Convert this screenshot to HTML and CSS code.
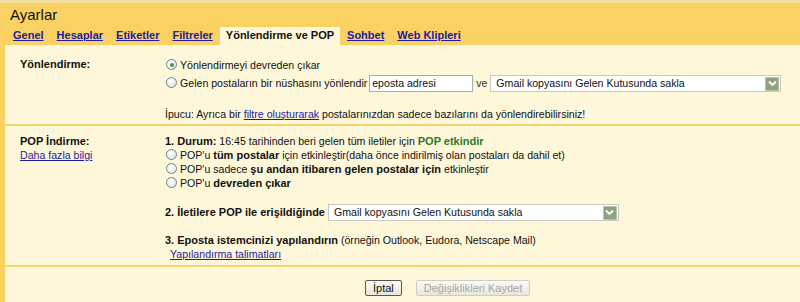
FILE: index.html
```html
<!DOCTYPE html>
<html lang="tr">
<head>
    <meta charset="UTF-8">
    <title>Ayarlar</title>
    <link rel="stylesheet" href="styles.css">
</head>
<body>
    <div class="settings">
        <div class="header">
            <h1>Ayarlar</h1>
            <div class="tabs">
                <a href="#" class="tab">Genel</a>
                <a href="#" class="tab">Hesaplar</a>
                <a href="#" class="tab">Etiketler</a>
                <a href="#" class="tab">Filtreler</a>
                <span class="tab active">Yönlendirme ve POP</span>
                <a href="#" class="tab">Sohbet</a>
                <a href="#" class="tab">Web Klipleri</a>
            </div>
        </div>

        <div class="content">
            <div class="section forward">
                <div class="label"><b>Yönlendirme:</b></div>
                <div class="options">
                    <div class="row"><span class="radio checked"></span>Yönlendirmeyi devreden çıkar</div>
                    <div class="row tall">
                        <span class="radio"></span>Gelen postaların bir nüshasını yönlendir
                        <span class="textbox">eposta adresi</span>
                        <span class="ve">ve</span>
                        <span class="select wide">Gmail kopyasını Gelen Kutusunda sakla<span class="arrow"><svg width="9" height="7" viewBox="0 0 9 7"><path d="M1 1.5 L4.5 5 L8 1.5" fill="none" stroke="#fff" stroke-width="1.8"/></svg></span></span>
                    </div>
                    <div class="row hint">İpucu: Ayrıca bir <a href="#">filtre oluşturarak</a> postalarınızdan sadece bazılarını da yönlendirebilirsiniz!</div>
                </div>
            </div>

            <div class="section pop">
                <div class="label">
                    <div class="row"><b>POP İndirme:</b></div>
                    <div class="row"><a href="#">Daha fazla bilgi</a></div>
                </div>
                <div class="options">
                    <div class="row"><b>1. Durum:</b> 16:45 tarihinden beri gelen tüm iletiler için <b class="on">POP etkindir</b></div>
                    <div class="row"><span class="radio"></span>POP'u <b>tüm postalar</b> için etkinleştir(daha önce indirilmiş olan postaları da dahil et)</div>
                    <div class="row"><span class="radio"></span>POP'u sadece <b>şu andan itibaren gelen postalar için</b> etkinleştir</div>
                    <div class="row"><span class="radio"></span>POP'u <b>devreden çıkar</b></div>
                    <div class="row tall step2"><b>2. İletilere POP ile erişildiğinde</b> <span class="select">Gmail kopyasını Gelen Kutusunda sakla<span class="arrow"><svg width="9" height="7" viewBox="0 0 9 7"><path d="M1 1.5 L4.5 5 L8 1.5" fill="none" stroke="#fff" stroke-width="1.8"/></svg></span></span></div>
                    <div class="row step3"><b>3. Eposta istemcinizi yapılandırın</b> (örneğin Outlook, Eudora, Netscape Mail)</div>
                    <div class="row config"><a href="#">Yapılandırma talimatları</a></div>
                </div>
            </div>

            <div class="actions">
                <button class="btn">İptal</button>
                <button class="btn" disabled>Değişiklikleri Kaydet</button>
            </div>
        </div>
    </div>
</body>
</html>
```

FILE: styles.css
```css
body {
    margin: 0;
    font-family: "Liberation Sans", Arial, sans-serif;
    font-size: 10.6px;
    color: #111;
    background: #fff7d9;
}
a {
    color: #1f1a9e;
}
.settings {
    width: 800px;
    height: 302px;
    overflow: hidden;
}
.header {
    background: #fad163;
    border-top: 3px solid #f3e0a0;
}
h1 {
    margin: 0;
    padding: 3px 0 0 10px;
    height: 21px;
    font-size: 15px;
    font-weight: normal;
    line-height: 17px;
}
.tabs {
    display: flex;
    gap: 1px;
    padding-left: 7px;
    align-items: flex-end;
}
.tab {
    padding: 0 6px;
    height: 18px;
    line-height: 17px;
    font-size: 11px;
    font-weight: bold;
    color: #1f1a9e;
}
.tab.active {
    background: #fff7d9;
    color: #111;
    text-decoration: none;
}
.content {
    border-left: 5px solid #fad163;
    height: 260px;
}
.section {
    display: grid;
    grid-template-columns: 145px 1fr;
    border-bottom: 2px solid #f6d36e;
}
.forward {
    padding: 13px 0 3px 15px;
}
.pop {
    padding: 8px 0 4px 15px;
}
.row {
    height: 14px;
    line-height: 14px;
    white-space: nowrap;
}
.label b,
.options b {
    font-size: 11px;
}
.row.tall {
    height: 17px;
    line-height: 17px;
    margin-top: 3px;
}
.hint {
    margin-top: 15px;
}
.radio {
    display: inline-block;
    vertical-align: -1px;
    width: 9px;
    height: 9px;
    border: 1px solid #6f7f95;
    border-radius: 50%;
    background: radial-gradient(circle at 35% 35%, #fff 0, #eaeae2 70%);
    margin: 0 3px 0 1px;
    position: relative;
}
.radio.checked::after {
    content: "";
    position: absolute;
    left: 2.5px;
    top: 2.5px;
    width: 4px;
    height: 4px;
    border-radius: 50%;
    background: #3d9a3d;
}
.textbox {
    display: inline-block;
    vertical-align: top;
    box-sizing: border-box;
    width: 104px;
    height: 17px;
    line-height: 15px;
    margin-left: -1px;
    padding-left: 2px;
    background: #fff;
    border: 1px solid #a8aeb3;
}
.ve {
    margin: 0;
    color: #333;
}
.select {
    display: inline-flex;
    vertical-align: top;
    align-items: center;
    justify-content: space-between;
    box-sizing: border-box;
    width: 291px;
    height: 17px;
    padding: 0 1px 0 5px;
    background: #fff;
    border: 1px solid #c8c8c0;
    margin-left: 0;
}
.arrow {
    width: 14px;
    height: 14px;
    background: #8ea27f;
    border: 1px solid #b7c3ad;
    border-radius: 1px;
    box-sizing: border-box;
    display: flex;
    align-items: center;
    justify-content: center;
}
.on {
    color: #2b7a2b;
}
.step2 {
    margin-top: 14px !important;
}
.step3 {
    margin-top: 12px;
}
.config {
    padding-left: 5px;
}
.actions {
    padding: 13px 0 0 360px;
    display: flex;
    gap: 14px;
}
.btn {
    font-family: "Liberation Sans", Arial, sans-serif;
    font-size: 11px;
    height: 16px;
    padding: 0 7px;
    line-height: 14px;
    background: linear-gradient(#fbfbf8, #e7e5dc);
    border: 1px solid #58584f;
    border-radius: 2px;
    color: #111;
}
.btn:disabled {
    border-color: #cfcdc2;
    color: #aaa79a;
}
```
